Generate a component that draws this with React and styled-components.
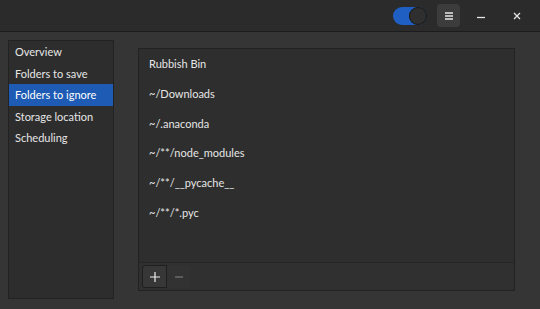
import React from "react";
import styled, { createGlobalStyle } from "styled-components";

const GlobalStyle = createGlobalStyle`
  html, body {
    margin: 0;
    padding: 0;
    background: #353535;
  }
  body {
    font-family: Lato, "Noto Sans", sans-serif;
    color: #e6e6e6;
  }
`;

const Window = styled.div`
  width: 540px;
  height: 309px;
  background: #353535;
  display: flex;
  flex-direction: column;
  overflow: hidden;
`;

const HeaderBar = styled.div`
  height: 31px;
  background: #2b2b2b;
  border-bottom: 1px solid #1c1c1c;
  display: flex;
  align-items: center;
  justify-content: flex-end;
  padding-right: 8px;
  gap: 6px;
`;

const Switch = styled.div`
  width: 34px;
  height: 18px;
  border-radius: 9px;
  background: #1f5fc4;
  position: relative;
  margin-right: 4px;
`;

const Knob = styled.div`
  position: absolute;
  right: 0;
  top: 0;
  width: 18px;
  height: 18px;
  border-radius: 50%;
  background: #2f2f2f;
  box-shadow: 0 0 0 1px #1a1a1a inset;
`;

const HeaderButton = styled.button`
  width: ${(p) => p.$w || 23}px;
  height: 23px;
  border: none;
  border-radius: 4px;
  background: ${(p) => (p.$filled ? "#3c3c3c" : "transparent")};
  color: #e6e6e6;
  display: flex;
  align-items: center;
  justify-content: center;
  padding: 0;
`;

const Body = styled.div`
  flex: 1;
  display: flex;
  align-items: flex-start;
  padding: 8px 0 0 8px;
  gap: 24px;
`;

const Sidebar = styled.div`
  width: 104px;
  height: 257px;
  background: #2d2d2d;
  border: 1px solid #222;
`;

const NavItem = styled.div`
  height: 21.5px;
  display: flex;
  align-items: center;
  padding-left: 6px;
  font-size: 11px;
  background: ${(p) => (p.$active ? "#1d5bb4" : "transparent")};
  color: ${(p) => (p.$active ? "#ffffff" : "#e6e6e6")};
  white-space: nowrap;
`;

const Panel = styled.div`
  margin-top: 8px;
  width: 375px;
  height: 241px;
  background: #2e2e2e;
  border: 1px solid #222;
  display: flex;
  flex-direction: column;
`;

const List = styled.div`
  flex: 1;
`;

const Row = styled.div`
  height: 29.7px;
  display: flex;
  align-items: center;
  padding-left: 10px;
  font-size: 11px;
  color: #e6e6e6;
`;

const Toolbar = styled.div`
  height: 27px;
  border-top: 1px solid #262626;
  background: #303030;
  display: flex;
  align-items: center;
  padding-left: 3px;
`;

const ToolButton = styled.button`
  width: ${(p) => (p.$raised ? 25 : 23)}px;
  height: 23px;
  border: ${(p) => (p.$raised ? "1px solid #1f1f1f" : "none")};
  border-radius: 3px 0 0 3px;
  background: ${(p) => (p.$raised ? "#373737" : "#323232")};
  display: flex;
  align-items: center;
  justify-content: center;
  padding: 0;
`;

const nav = [
  "Overview",
  "Folders to save",
  "Folders to ignore",
  "Storage location",
  "Scheduling",
];

const folders = [
  "Rubbish Bin",
  "~/Downloads",
  "~/.anaconda",
  "~/**/node_modules",
  "~/**/__pycache__",
  "~/**/*.pyc",
];

export default function App() {
  return (
    <Window>
      <GlobalStyle />
      <HeaderBar>
        <Switch>
          <Knob />
        </Switch>
        <HeaderButton $filled>
          <svg width="10" height="10" viewBox="0 0 10 10">
            <path d="M1 2h8M1 5h8M1 8h8" stroke="#e6e6e6" strokeWidth="1.3" />
          </svg>
        </HeaderButton>
        <HeaderButton $w={30}>
          <svg width="8" height="8" viewBox="0 0 8 8">
            <path d="M0 5.5h8" stroke="#e6e6e6" strokeWidth="1.3" />
          </svg>
        </HeaderButton>
        <HeaderButton $w={30}>
          <svg width="8" height="8" viewBox="0 0 8 8">
            <path d="M1 1l6 6M7 1l-6 6" stroke="#e6e6e6" strokeWidth="1.3" />
          </svg>
        </HeaderButton>
      </HeaderBar>
      <Body>
        <Sidebar>
          {nav.map((item) => (
            <NavItem key={item} $active={item === "Folders to ignore"}>
              {item}
            </NavItem>
          ))}
        </Sidebar>
        <Panel>
          <List>
            {folders.map((f) => (
              <Row key={f}>{f}</Row>
            ))}
          </List>
          <Toolbar>
            <ToolButton $raised>
              <svg width="10" height="10" viewBox="0 0 10 10">
                <path d="M5 0v10M0 5h10" stroke="#eeeeee" strokeWidth="1.2" />
              </svg>
            </ToolButton>
            <ToolButton>
              <svg width="8" height="8" viewBox="0 0 8 8">
                <path d="M0 4h8" stroke="#777" strokeWidth="1.2" />
              </svg>
            </ToolButton>
          </Toolbar>
        </Panel>
      </Body>
    </Window>
  );
}
